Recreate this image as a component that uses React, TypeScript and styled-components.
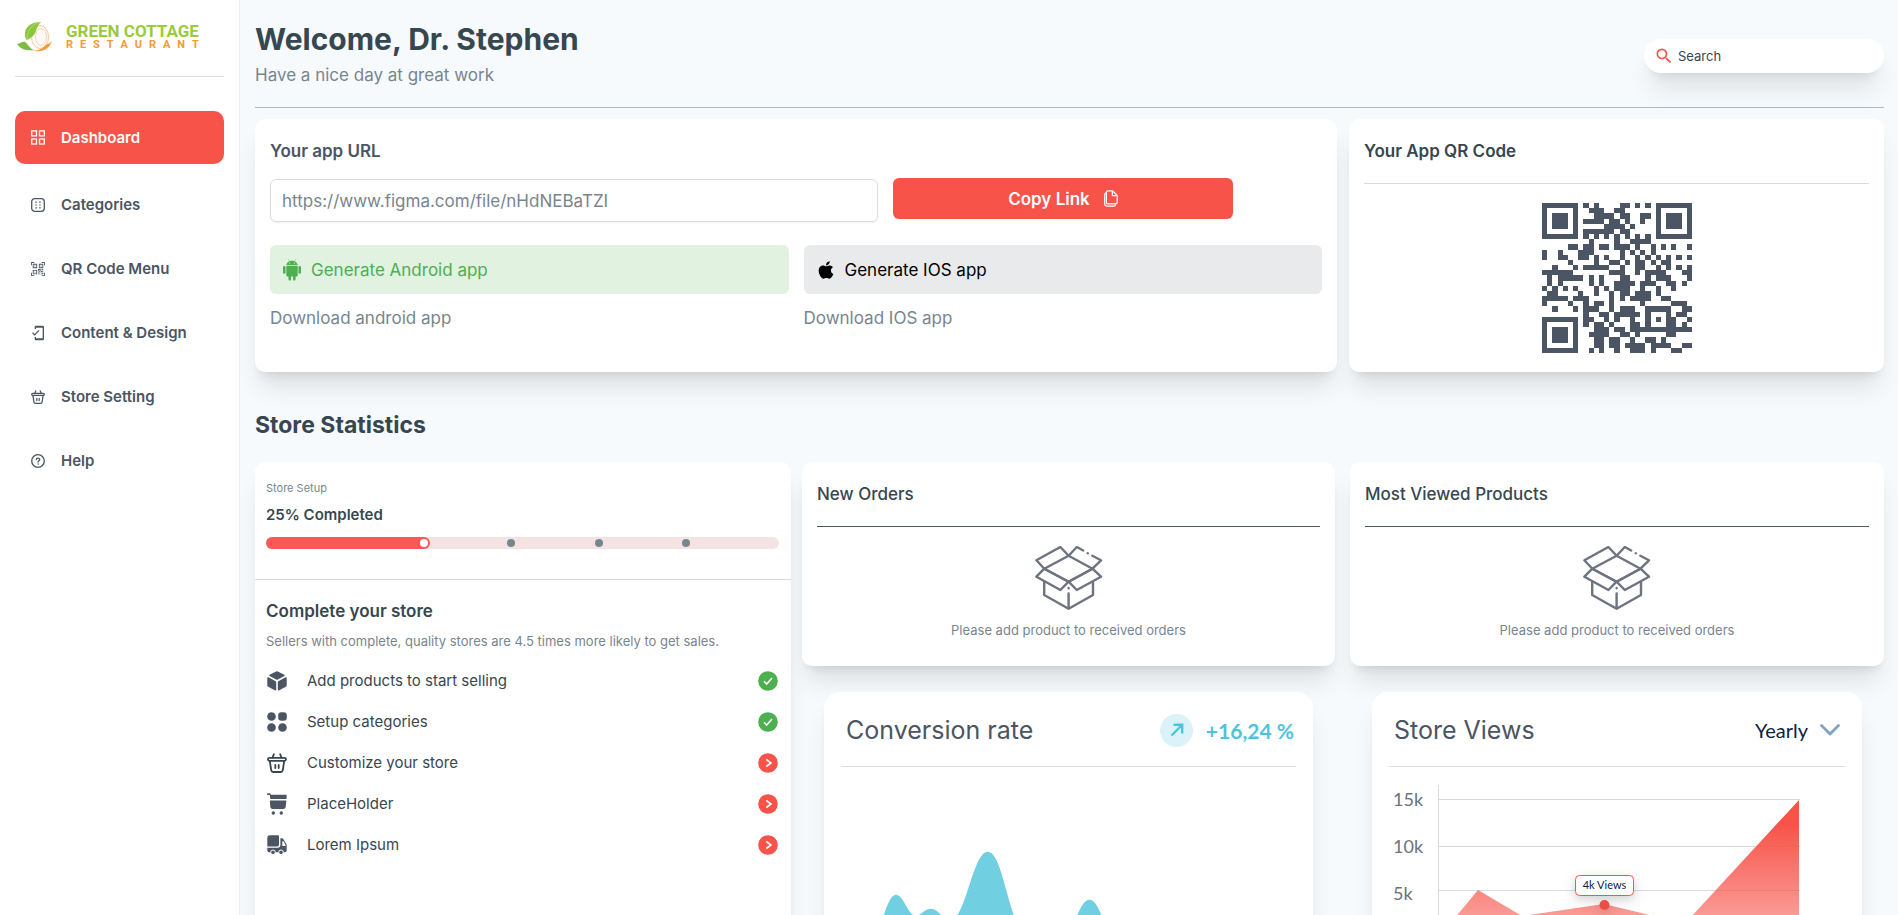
import React from "react";
import styled, { createGlobalStyle } from "styled-components";
import { MdOutlineMobileFriendly, MdSearch } from "react-icons/md";
import { FaApple } from "react-icons/fa";
import { BsQrCodeScan } from "react-icons/bs";
import { AiFillAndroid } from "react-icons/ai";

const red = "#f75349";
const ink = "#37474f";
const slate = "#4b5563";
const muted = "#78858f";
const cardShadow = "0 20px 25px -5px rgba(0,0,0,0.1), 0 8px 10px -6px rgba(0,0,0,0.1)";

const GlobalStyle = createGlobalStyle`
  * { box-sizing: border-box; }
  body { margin: 0; font-family: Inter, sans-serif; color: ${ink}; background: #f6fafd; }
  h1, h2, h3, p, ul { margin: 0; padding: 0; }
  button, input, select { font-family: inherit; }
`;

const Shell = styled.div`
  display: flex;
  height: 100vh;
`;

const Sidebar = styled.aside`
  flex: 0 0 240px;
  background: #fff;
  border-right: 1px solid #e9eef2;
  padding: 0 15px;
`;

const Brand = styled.a`
  display: flex;
  align-items: center;
  gap: 14px;
  height: 77px;
  padding: 0 0 2px 2px;
  border-bottom: 1px solid #dcdfe1;
  text-decoration: none;
`;

const BrandText = styled.span`
  display: flex;
  flex-direction: column;
  font-family: Roboto, sans-serif;
  font-weight: 700;
`;

const BrandName = styled.span`
  font-size: 17px;
  line-height: 16px;
  color: #9bcb3c;
`;

const BrandKind = styled.span`
  display: flex;
  justify-content: space-between;
  font-size: 11px;
  line-height: 12px;
  color: #f39b35;
`;

const Nav = styled.nav`
  display: flex;
  flex-direction: column;
  gap: 11px;
  padding-top: 34px;
`;

const NavItem = styled.a<{ $active?: boolean }>`
  display: flex;
  align-items: center;
  gap: 16px;
  height: 53px;
  padding: 0 16px;
  margin-bottom: ${(p) => (p.$active ? "3px" : "0")};
  border-radius: 10px;
  font-size: 15px;
  font-weight: 600;
  text-decoration: none;
  color: ${(p) => (p.$active ? "#fff" : slate)};
  background: ${(p) => (p.$active ? red : "transparent")};
`;

const IconSlot = styled.span<{ $size: number }>`
  display: flex;
  align-items: center;
  justify-content: center;
  flex: 0 0 ${(p) => p.$size}px;
  min-width: 0;
  svg { flex: none; }
`;

const Main = styled.main`
  flex: 1;
  min-width: 0;
  padding: 0 14px 24px 15px;
  overflow-y: auto;
  scrollbar-width: none;
`;

const Header = styled.header`
  display: flex;
  align-items: center;
  justify-content: space-between;
  height: 108px;
  padding-top: 4px;
  border-bottom: 1px solid #b0b8be;
  margin-bottom: 11px;
`;

const Greeting = styled.div`
  padding-bottom: 2px;
`;

const Title = styled.h1`
  font-size: 30px;
  line-height: 40px;
  font-weight: 700;
`;

const Subtitle = styled.p`
  font-size: 17px;
  line-height: 32px;
  color: ${muted};
`;

const SearchBox = styled.label`
  display: flex;
  align-items: center;
  gap: 4px;
  width: 240px;
  height: 34px;
  padding: 0 10px;
  border-radius: 17px;
  background: #fff;
  color: ${red};
  box-shadow: ${cardShadow};
  input {
    flex: 1;
    min-width: 0;
    border: 0;
    outline: 0;
    padding: 0;
    background: none;
    font-size: 13px;
    color: ${ink};
  }
  input::placeholder { color: ${ink}; opacity: 1; }
`;

const TopRow = styled.div`
  display: grid;
  grid-template-columns: minmax(0, 1082fr) minmax(0, 535fr);
  gap: 12px;
`;

const Card = styled.section`
  background: #fff;
  border-radius: 10px;
  box-shadow: ${cardShadow};
`;

const PaddedCard = styled(Card)`
  padding: 20px 15px 19px;
`;

const CardTitle = styled.h2<{ $tone?: string; $weight?: number }>`
  font-size: 17px;
  line-height: 24px;
  font-weight: ${(p) => p.$weight ?? 600};
  color: ${(p) => p.$tone ?? ink};
`;

const Rule = styled.hr<{ $tone?: string }>`
  border: 0;
  height: 1px;
  margin: 20px 0 19px;
  background: ${(p) => p.$tone ?? "#d9dcde"};
`;

const LinkRow = styled.div`
  display: flex;
  gap: 15px;
  padding-top: 15px;
`;

const UrlInput = styled.input`
  flex: 0 1 608px;
  min-width: 0;
  height: 43px;
  margin-top: 1px;
  padding: 0 11px;
  border: 1px solid #dadde0;
  border-radius: 6px;
  outline: 0;
  font-size: 17px;
  color: ${muted};
  box-shadow: 0 1px 2px rgba(0, 0, 0, 0.06);
`;

const CopyButton = styled.button`
  display: flex;
  align-items: center;
  justify-content: center;
  gap: 14px;
  flex: 0 0 340px;
  height: 41px;
  border: 0;
  border-radius: 6px;
  background: ${red};
  color: #fff;
  font-size: 17px;
  font-weight: 600;
`;

const AppGrid = styled.div`
  display: grid;
  grid-template-columns: 1fr 1fr;
  gap: 12px 15px;
  padding: 23px 0 21px;
`;

const AppButton = styled.button<{ $fg: string; $bg: string }>`
  display: flex;
  align-items: center;
  gap: 7px;
  height: 49px;
  padding: 0 10px;
  border: 0;
  border-radius: 6px;
  font-size: 17px;
  color: ${(p) => p.$fg};
  background: ${(p) => p.$bg};
`;

const DownloadLink = styled.a`
  font-size: 17px;
  line-height: 24px;
  color: ${muted};
  text-decoration: none;
`;

const QrHolder = styled.div`
  display: flex;
  justify-content: center;
`;

const SectionTitle = styled.h2`
  font-size: 23px;
  line-height: 32px;
  font-weight: 700;
  margin: 37px 0 21px;
`;

const StatsRow = styled.div`
  display: grid;
  grid-template-columns: repeat(3, minmax(0, 1fr));
`;

const Column = styled.div<{ $left: number; $right: number }>`
  display: flex;
  flex-direction: column;
  padding-left: ${(p) => p.$left}px;
  padding-right: ${(p) => p.$right}px;
`;

const SetupCard = styled(Card)`
  flex: 1;
`;

const SetupHead = styled.div`
  padding: 16px 12px 30px 11px;
  border-bottom: 1px solid #d9dcde;
`;

const SetupLabel = styled.p`
  font-size: 11px;
  line-height: 20px;
  color: ${muted};
`;

const SetupValue = styled.p`
  font-size: 15px;
  line-height: 24px;
  font-weight: 600;
  padding: 5px 0 10px;
`;

const Track = styled.div`
  display: grid;
  grid-template-columns: 32fr 17fr 17fr 17fr 17fr;
  align-items: center;
  height: 12px;
  border-radius: 6px;
  background: #f5e3e4;
`;

const Step = styled.span<{ $done?: boolean }>`
  display: flex;
  align-items: center;
  justify-content: flex-end;
  height: 12px;
  padding-right: 2px;
  border-radius: 6px;
  background: ${(p) => (p.$done ? "#ff5656" : "transparent")};
  &::after {
    content: "";
    width: 8px;
    height: 8px;
    border-radius: 50%;
    background: ${(p) => (p.$done ? "#fff" : "#78868e")};
  }
`;

const SetupBody = styled.div`
  padding: 19px 13px 19px 11px;
`;

const SetupTitle = styled.h3`
  font-size: 17px;
  line-height: 24px;
  font-weight: 600;
`;

const SetupHint = styled.p`
  font-size: 13px;
  line-height: 20px;
  padding-top: 8px;
  color: ${muted};
`;

const TaskList = styled.ul`
  list-style: none;
  padding-top: 9px;
`;

const Task = styled.li`
  display: flex;
  align-items: center;
  gap: 20px;
  height: 41px;
  padding-left: 1px;
  font-size: 15px;
  span { flex: 1; }
`;

const EmptyBody = styled.div`
  display: flex;
  flex-direction: column;
  align-items: center;
  gap: 10px;
  padding-bottom: 7px;
  font-size: 13px;
  line-height: 20px;
  color: ${muted};
`;

const ChartCard = styled(Card)`
  margin: 26px 22px 0;
  border-radius: 16px;
`;

const ChartHead = styled.div`
  display: flex;
  align-items: center;
  justify-content: space-between;
  height: 75px;
  margin: 0 17px;
  padding: 2px 2px 0 5px;
  border-bottom: 1px solid #dcdee4;
`;

const ChartTitle = styled.h3`
  font-size: 25px;
  line-height: 32px;
  font-weight: 400;
  color: ${slate};
`;

const Trend = styled.div`
  display: flex;
  align-items: center;
  gap: 13px;
  font-family: Lato, sans-serif;
  font-size: 21px;
  font-weight: 700;
  color: #4cc5dc;
`;

const PeriodPicker = styled.label`
  display: flex;
  align-items: center;
  gap: 11px;
  padding-right: 3px;
  select {
    appearance: none;
    border: 0;
    outline: 0;
    padding: 0;
    background: none;
    font-family: Lato, sans-serif;
    font-size: 20px;
    color: #0d2240;
  }
`;

const ChartSvg = styled.svg`
  display: block;
  width: 100%;
  font-family: Lato, sans-serif;
`;

/* Column numbers of the dark modules, one list per row of the 29 by 29 code. */
const finder = [
  [0, 1, 2, 3, 4, 5, 6],
  [0, 6],
  [0, 2, 3, 4, 6],
  [0, 2, 3, 4, 6],
  [0, 2, 3, 4, 6],
  [0, 6],
  [0, 1, 2, 3, 4, 5, 6],
];

const qrData = [
  [8, 10, 15, 16, 18, 20],
  [9, 10, 11, 14, 15],
  [10, 11, 12, 13, 15, 16, 19, 20],
  [8, 9, 10, 11, 13, 14, 16, 19],
  [12, 13, 14, 15, 17],
  [8, 9, 10, 11, 12, 13, 15, 16],
  [8, 10, 12, 14, 16, 18, 20],
  [9, 14, 17, 18, 19, 20],
  [5, 6, 8, 9, 11, 12, 14, 15, 16, 18, 21, 23, 25, 28],
  [0, 3, 7, 8, 9, 15, 17, 19, 21],
  [0, 3, 4, 7, 8, 10, 12, 15, 18, 20, 22, 24, 26, 28],
  [5, 10, 13, 14, 16, 18, 19, 21, 23, 24],
  [2, 6, 8, 9, 10, 11, 12, 15, 18, 19, 22, 24, 26, 28],
  [0, 1, 2, 3, 4, 5, 13, 14, 15, 18, 20, 21, 22, 23, 27, 28],
  [1, 3, 4, 5, 6, 7, 9, 11, 15, 16, 20, 22, 23, 24, 28],
  [1, 3, 9, 11, 14, 15, 16, 17, 19, 20, 21, 24, 25, 27],
  [0, 2, 4, 6, 10, 12, 14, 15, 16, 19, 22, 25],
  [1, 2, 7, 10, 13, 15, 16, 18, 19, 20, 22],
  [0, 1, 2, 3, 4, 6, 7, 8, 13, 15, 17, 18, 19, 20, 23, 24],
  [0, 5, 8, 10, 11, 13, 19, 25, 26, 27],
  [2, 6, 8, 9, 10, 13, 15, 16, 17, 20, 21, 22, 23, 24, 27, 28],
  [8, 11, 12, 14, 15, 16, 17, 18, 20, 24, 26, 27],
  [8, 9, 12, 14, 17, 20, 22, 24, 25, 28],
  [8, 10, 11, 13, 17, 18, 20, 24, 25, 27],
  [10, 11, 12, 14, 15, 17, 18, 19, 20, 21, 22, 23, 24, 25, 26, 27, 28],
  [9, 10, 11, 12, 15, 16, 18, 24, 25],
  [10, 11, 13, 14, 17, 20, 21, 23],
  [10, 11, 13, 14, 16, 17, 18, 19, 21, 22, 23, 24, 27, 28],
  [9, 11, 14, 17, 18, 19, 21, 25, 26],
];

const qrModules = qrData.map((columns, y) => {
  if (y < 7) return [...finder[y], ...columns, ...finder[y].map((x) => x + 22)];
  if (y > 21) return [...finder[y - 22], ...columns];
  return columns;
});

const QrCode = () => (
  <svg width="150" height="150" viewBox="0 0 29 29" shapeRendering="crispEdges" role="img" aria-label="App QR code">
    {qrModules.map((columns, y) => columns.map((x) => <rect key={`${x}-${y}`} x={x} y={y} width="1" height="1" fill={slate} />))}
  </svg>
);

const LogoMark = () => (
  <svg width="35" height="30" viewBox="0 0 35 30" aria-hidden="true">
    <ellipse cx="23" cy="15" rx="8.500" ry="11.500" fill="#fffaf5" stroke="#f7c795" strokeWidth="1" />
    <ellipse cx="24" cy="15" rx="5.500" ry="8.500" fill="none" stroke="#f8d8b8" strokeWidth="1" />
    <path d="M24 0C13 0 7 6 8 14c0 2 1 3 2 4 4-2 7-4 9-9 1-4 2-6 5-9z" fill="#8cc63f" />
    <path d="M24 0C17 1 10 7 10 18" fill="none" stroke="#b9dc7c" strokeWidth="0.800" />
    <path d="M0 22c4 0 5-3 8-2 3 2 4 6 9 8-6 1-13 0-17-6z" fill="#7dbb42" />
    <path d="M15 28c8 2 11-3 15-6 2 0 3-1 5-3-2 7-10 13-20 9z" fill="#f39b45" />
  </svg>
);

const DashboardIcon = () => (
  <svg width="14" height="15" viewBox="0 0 14 15" fill="none" stroke="currentColor" strokeWidth="1.300" aria-hidden="true">
    <rect x="0.700" y="0.900" width="4.800" height="5" />
    <rect x="8.500" y="0.900" width="4.800" height="5" />
    <rect x="0.700" y="9" width="4.800" height="5" />
    <rect x="8.500" y="9" width="4.800" height="5" />
  </svg>
);

const CategoriesIcon = () => (
  <svg width="14" height="14" viewBox="0 0 14 14" fill="none" stroke="currentColor" aria-hidden="true">
    <rect x="0.700" y="0.700" width="12.600" height="12.600" rx="3" strokeWidth="1.300" />
    <path d="M4.300 4.200h1.500M8.200 4.200h1.500M4.300 7h1.500M8.200 7h1.500M4.300 9.800h1.500M8.200 9.800h1.500" strokeWidth="1.200" />
  </svg>
);

const HelpIcon = () => (
  <svg width="14" height="14" viewBox="0 0 14 14" fill="none" stroke="currentColor" strokeWidth="1.300" strokeLinecap="round" aria-hidden="true">
    <circle cx="7" cy="7" r="6.300" />
    <path d="M5.400 5.600c0-2.100 3.300-2.100 3.300 0 0 1.200-1.600 1.200-1.600 2.400M7.100 10v.1" />
  </svg>
);

const BasketIcon = ({ size }: { size: number }) => (
  <svg width={size} height={size} viewBox="0 0 20 20" fill="none" stroke="currentColor" strokeWidth="1.800" strokeLinecap="round" strokeLinejoin="round" aria-hidden="true">
    <path d="M6.800 1.200 5.600 4.600M13.200 1.200l1.200 3.400" />
    <rect x="1" y="4.800" width="18" height="3" rx="1.500" />
    <path d="m2.800 8 1.400 9.200c.2 1.200.9 1.800 2 1.800h7.600c1.100 0 1.800-.6 2-1.800L17.200 8" />
    <path d="M8.300 12v3M11.700 12v3" />
  </svg>
);

const FilesIcon = () => (
  <svg width="14" height="17" viewBox="0 0 14 17" fill="none" stroke="currentColor" strokeWidth="1.200" strokeLinejoin="round" aria-hidden="true">
    <path d="M4 .8h4.600l4.600 4.700v6.700a1.600 1.600 0 0 1-1.600 1.600H4a1.600 1.600 0 0 1-1.600-1.600V2.400A1.600 1.600 0 0 1 4 .8z" />
    <path d="M8.400 1v4.700h4.600M2.400 2.800C1.300 3 .7 3.600.7 4.600v9.200c0 1.500.9 2.400 2.400 2.400h6.700c1 0 1.700-.7 1.900-1.900" />
  </svg>
);

const CubeIcon = () => (
  <svg width="20" height="20" viewBox="0 0 20 20" fill={slate} aria-hidden="true">
    <path d="M9.200.4a1.700 1.700 0 0 1 1.600 0l6.600 3.400c.5.300.5.800 0 1.100l-6.600 3.700a1.700 1.700 0 0 1-1.600 0L2.600 4.900c-.5-.3-.5-.8 0-1.100z" />
    <path d="M.3 6.900c0-.6.500-.8 1-.6l7 3.800c.6.300.9.700.9 1.400v7.300c0 .7-.4 1-1 .7l-7-3.700c-.6-.3-.9-.8-.9-1.400zM19.700 6.900c0-.6-.5-.8-1-.6l-7 3.800c-.6.300-.9.700-.9 1.400v7.300c0 .7.400 1 1 .7l7-3.700c.6-.3.9-.8.9-1.400z" />
  </svg>
);

const DotsIcon = () => (
  <svg width="20" height="20" viewBox="0 0 20 20" fill={slate} aria-hidden="true">
    <circle cx="4.500" cy="4.500" r="4.300" />
    <rect x="11.200" y=".2" width="8.600" height="8.600" rx="3.200" />
    <circle cx="4.500" cy="15.500" r="4.300" />
    <circle cx="15.500" cy="15.500" r="4.300" />
  </svg>
);

const CartIcon = () => (
  <svg width="20" height="22" viewBox="0 0 20 22" fill={slate} aria-hidden="true">
    <path d="M.8.300h1.400c1 0 1.600.6 1.700 1.500h14.300c1 0 1.600.6 1.500 1.600L19.500 6H3.300L2.800 2H.8C-.3 2-.3.300.8.300z" />
    <path d="M2.800 7.500h16.600l-.7 6c-.2 1.700-1 2.500-2.600 2.500H5.900c-1.600 0-2.400-.8-2.600-2.500z" />
    <circle cx="6.300" cy="20" r="1.700" />
    <circle cx="14.300" cy="20" r="1.700" />
  </svg>
);

const TruckIcon = () => (
  <svg width="20" height="20" viewBox="0 0 20 20" aria-hidden="true">
    <path d="M3 .3h8c.6 0 1 .4 1 1v8.400c0 1-.7 1.700-1.700 1.700H.3V3C.3 1.300 1.300.300 3 .300z" fill={slate} />
    <path d="M13.400 3.300h1.500c.7 0 1.200.3 1.500.9l2.900 4.900c.3.500.4.900.4 1.400v4.500c0 1.400-.9 2.300-2.300 2.300H2.600C1.200 17.300.3 16.400.3 15v-2.200h10.400c1.600 0 2.700-1.100 2.700-2.700z" fill={slate} />
    <path d="M15.300 6.300h1.200l2 3.600v1h-3.200z" fill="#fff" />
    <circle cx="6" cy="17.300" r="2.300" fill={slate} stroke="#fff" />
    <circle cx="14" cy="17.300" r="2.300" fill={slate} stroke="#fff" />
  </svg>
);

const StatusIcon = ({ done }: { done: boolean }) => (
  <svg width="20" height="20" viewBox="0 0 20 20" fill="none" stroke="#fff" role="img" aria-label={done ? "Done" : "To do"}>
    <circle cx="10" cy="10" r="9.800" fill={done ? "#4caf50" : red} stroke="none" />
    <path d={done ? "m6 10.300 2.700 2.700L14 7" : "m8.300 6.500 4.700 3.500-4.700 3.500"} strokeWidth="1.600" />
  </svg>
);

const BoxIcon = () => (
  <svg width="68" height="64" viewBox="0 0 68 64" fill="none" stroke="#6e7380" strokeWidth="2.400" strokeLinejoin="round" strokeLinecap="round" aria-hidden="true">
    <path d="M1.400 14.300 25.400 1l8.200 8.700L9.300 22.700zM9.300 22.700l-7.900 8L25.400 44l8.200-8.300z" />
    <path d="M33.600 9.700 41.800 1l6.400 3.500M57.300 9.700l8.700 4.600-8.500 8.400L33.600 9.700M57.500 22.700l8.500 8L41.800 44l-8.200-8.300z" />
    <path d="M9.300 22.700 33.600 35.700 57.500 22.700" />
    <path d="M9.200 36v13l24.400 13.700L58 49V36M33.600 47.500v15M33.600 42v.3M52.700 7.200l.2.100" />
  </svg>
);

const navItems = [
  { label: "Dashboard", icon: <DashboardIcon /> },
  { label: "Categories", icon: <CategoriesIcon /> },
  { label: "QR Code Menu", icon: <BsQrCodeScan size={14} /> },
  { label: "Content & Design", icon: <MdOutlineMobileFriendly size={16} /> },
  { label: "Store Setting", icon: <BasketIcon size={14} /> },
  { label: "Help", icon: <HelpIcon /> },
];

const tasks = [
  { label: "Add products to start selling", icon: <CubeIcon />, done: true },
  { label: "Setup categories", icon: <DotsIcon />, done: true },
  { label: "Customize your store", icon: <BasketIcon size={20} />, done: false },
  { label: "PlaceHolder", icon: <CartIcon />, done: false },
  { label: "Lorem Ipsum", icon: <TruckIcon />, done: false },
];

const EmptyCard = ({ title }: { title: string }) => (
  <PaddedCard>
    <CardTitle $weight={500}>{title}</CardTitle>
    <Rule $tone="#455a64" />
    <EmptyBody>
      <BoxIcon />
      <p>Please add product to received orders</p>
    </EmptyBody>
  </PaddedCard>
);

const ConversionChart = () => (
  <ChartSvg viewBox="0 0 490 230" role="img" aria-label="Conversion rate">
    <path
      d="M36 191C54 191 60 128 72 128C80 128 84 149 92 149C97 149 101 142 107 142C115 142 118 153 127 153C142 153 149 85 164 85C182 85 184 173 214 181C250 189 252 133 266 133C280 133 284 191 310 191L454 191V205H36Z"
      fill="#70cfe0"
    />
  </ChartSvg>
);

const ViewsChart = () => (
  <ChartSvg viewBox="0 0 490 230" role="img" aria-label="Store views">
    <defs>
      <linearGradient id="viewsFill" x1="0" y1="33" x2="0" y2="190" gradientUnits="userSpaceOnUse">
        <stop offset="0.150" stopColor="#f75349" />
        <stop offset="1" stopColor="#f75349" stopOpacity="0.400" />
      </linearGradient>
      <filter id="tipShadow" x="-50%" y="-80%" width="200%" height="300%">
        <feDropShadow dx="0" dy="4" stdDeviation="6" floodOpacity="0.180" />
      </filter>
    </defs>
    <path d="M66.500 18V180M66 32.500H428M66 79.500H428M66 123.500H428M66 170H428" stroke="#d9dae1" fill="none" />
    <g fill="#6b7280" fontSize="18">
      <text x="21" y="39">15k</text>
      <text x="21" y="86">10k</text>
      <text x="21" y="133">5k</text>
    </g>
    <path d="M67 170 106 123 150 149 232 137 290 151 318 151 427 33V170Z" fill="url(#viewsFill)" />
    <g filter="url(#tipShadow)">
      <rect x="203.500" y="108.500" width="58" height="20" rx="4" fill="#fff" stroke="#f75349" />
      <circle cx="232.500" cy="138" r="5" fill="#e94f46" />
    </g>
    <text x="232.500" y="122" fontSize="11" textAnchor="middle" fill="#0d2240">4k Views</text>
  </ChartSvg>
);

export default function App() {
  return (
    <>
      <GlobalStyle />
      <Shell>
        <Sidebar>
          <Brand href="#">
            <LogoMark />
            <BrandText>
              <BrandName>GREEN COTTAGE</BrandName>
              <BrandKind aria-label="RESTAURANT">
                {"RESTAURANT".split("").map((letter, i) => (
                  <span key={i}>{letter}</span>
                ))}
              </BrandKind>
            </BrandText>
          </Brand>
          <Nav>
            {navItems.map((item, i) => (
              <NavItem key={item.label} href="#" $active={i === 0}>
                <IconSlot $size={14}>{item.icon}</IconSlot>
                {item.label}
              </NavItem>
            ))}
          </Nav>
        </Sidebar>
        <Main>
          <Header>
            <Greeting>
              <Title>Welcome, Dr. Stephen</Title>
              <Subtitle>Have a nice day at great work</Subtitle>
            </Greeting>
            <SearchBox>
              <MdSearch size={20} aria-hidden="true" />
              <input type="search" placeholder="Search" aria-label="Search" />
            </SearchBox>
          </Header>
          <TopRow>
            <PaddedCard>
              <CardTitle $tone={slate}>Your app URL</CardTitle>
              <LinkRow>
                <UrlInput type="text" aria-label="Your app URL" defaultValue="https://www.figma.com/file/nHdNEBaTZI" />
                <CopyButton type="button">
                  Copy Link
                  <FilesIcon />
                </CopyButton>
              </LinkRow>
              <AppGrid>
                <AppButton type="button" $fg="#4caf50" $bg="#e1f2e1">
                  <IconSlot $size={24}>
                    <AiFillAndroid size={24} aria-hidden="true" />
                  </IconSlot>
                  Generate Android app
                </AppButton>
                <AppButton type="button" $fg="#000" $bg="#e9eaec">
                  <IconSlot $size={24}>
                    <FaApple size={20} aria-hidden="true" />
                  </IconSlot>
                  Generate IOS app
                </AppButton>
                <DownloadLink href="#">Download android app</DownloadLink>
                <DownloadLink href="#">Download IOS app</DownloadLink>
              </AppGrid>
            </PaddedCard>
            <PaddedCard>
              <CardTitle>Your App QR Code</CardTitle>
              <Rule />
              <QrHolder>
                <QrCode />
              </QrHolder>
            </PaddedCard>
          </TopRow>
          <SectionTitle>Store Statistics</SectionTitle>
          <StatsRow>
            <Column $left={0} $right={7}>
              <SetupCard>
                <SetupHead>
                  <SetupLabel>Store Setup</SetupLabel>
                  <SetupValue>25% Completed</SetupValue>
                  <Track role="progressbar" aria-label="Store setup" aria-valuenow={25}>
                    <Step $done />
                    <Step />
                    <Step />
                    <Step />
                  </Track>
                </SetupHead>
                <SetupBody>
                  <SetupTitle>Complete your store</SetupTitle>
                  <SetupHint>Sellers with complete, quality stores are 4.5 times more likely to get sales.</SetupHint>
                  <TaskList>
                    {tasks.map((task) => (
                      <Task key={task.label}>
                        {task.icon}
                        <span>{task.label}</span>
                        <StatusIcon done={task.done} />
                      </Task>
                    ))}
                  </TaskList>
                </SetupBody>
              </SetupCard>
            </Column>
            <Column $left={4} $right={6}>
              <EmptyCard title="New Orders" />
              <ChartCard>
                <ChartHead>
                  <ChartTitle>Conversion rate</ChartTitle>
                  <Trend>
                    <svg width="33" height="33" viewBox="0 0 33 33" fill="none" aria-hidden="true">
                      <circle cx="16.500" cy="16.500" r="16.500" fill="#dbf2f8" />
                      <path d="M11.500 21.500 22 11M13.500 10.800H22.200V19.500" stroke="#4cc5dc" strokeWidth="2.400" />
                    </svg>
                    +16,24 %
                  </Trend>
                </ChartHead>
                <ConversionChart />
              </ChartCard>
            </Column>
            <Column $left={9} $right={0}>
              <EmptyCard title="Most Viewed Products" />
              <ChartCard>
                <ChartHead>
                  <ChartTitle>Store Views</ChartTitle>
                  <PeriodPicker>
                    <select aria-label="Period" defaultValue="Yearly">
                      <option>Yearly</option>
                    </select>
                    <svg width="20" height="12" viewBox="0 0 20 12" fill="none" aria-hidden="true">
                      <path d="m1.500 1.500 8.500 8.500 8.500-8.500" stroke="#7fa3c0" strokeWidth="2.800" strokeLinecap="round" strokeLinejoin="round" />
                    </svg>
                  </PeriodPicker>
                </ChartHead>
                <ViewsChart />
              </ChartCard>
            </Column>
          </StatsRow>
        </Main>
      </Shell>
    </>
  );
}
